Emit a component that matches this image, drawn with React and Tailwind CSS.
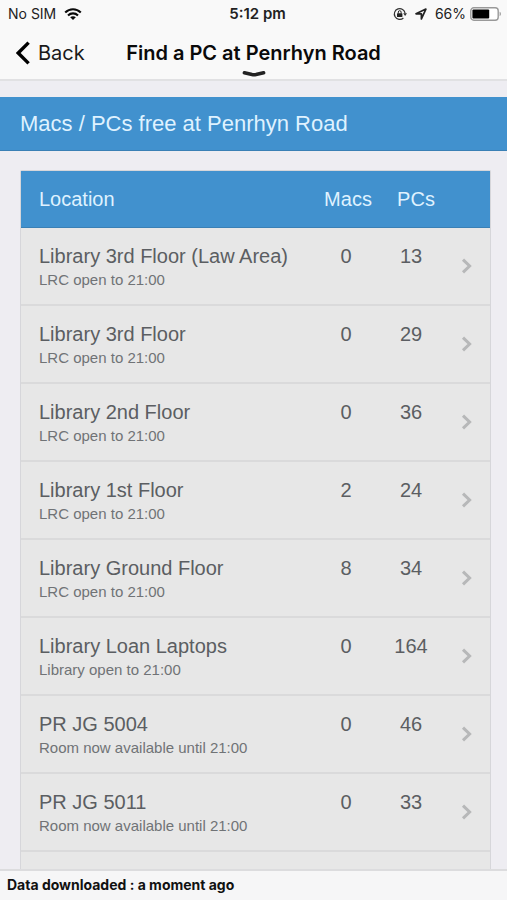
import React from "react";

const rooms = [
  { name: "Library 3rd Floor (Law Area)", note: "LRC open to 21:00", macs: 0, pcs: 13 },
  { name: "Library 3rd Floor", note: "LRC open to 21:00", macs: 0, pcs: 29 },
  { name: "Library 2nd Floor", note: "LRC open to 21:00", macs: 0, pcs: 36 },
  { name: "Library 1st Floor", note: "LRC open to 21:00", macs: 2, pcs: 24 },
  { name: "Library Ground Floor", note: "LRC open to 21:00", macs: 8, pcs: 34 },
  { name: "Library Loan Laptops", note: "Library open to 21:00", macs: 0, pcs: 164 },
  { name: "PR JG 5004", note: "Room now available until 21:00", macs: 0, pcs: 46 },
  { name: "PR JG 5011", note: "Room now available until 21:00", macs: 0, pcs: 33 },
];

function WifiIcon() {
  return (
    <svg className="h-3 w-[18px]" viewBox="0 0 18 12" aria-hidden="true">
      <g fill="none" stroke="#0a0a0a" strokeWidth="2.1">
        <path d="M1.2 4.6C5.6 0.2 12.4 0.2 16.8 4.6" />
        <path d="M4 7.4C6.8 4.7 11.2 4.7 14 7.4" />
      </g>
      <path d="M9 12L6.2 9.3C7.8 7.9 10.2 7.9 11.8 9.3Z" fill="#0a0a0a" />
    </svg>
  );
}

function RotationLockIcon() {
  return (
    <svg className="size-3.5" viewBox="0 0 14 14" aria-hidden="true">
      <path d="M10.4 11A5.4 5.4 0 1 1 12.1 6.4" fill="none" stroke="#333" strokeWidth="1.2" />
      <path d="M10.2 6.2H14L12.1 8.9Z" fill="#333" />
      <rect x="4" y="6.2" width="5.4" height="3.9" rx="0.5" fill="#222" />
      <path d="M5.3 6.5V5.1A1.4 1.4 0 0 1 8.1 5.1V6.5" fill="none" stroke="#222" strokeWidth="1" />
    </svg>
  );
}

function LocationIcon() {
  return (
    <svg className="size-3" viewBox="0 0 12 12" aria-hidden="true">
      <path d="M1 5.8L10.9 1.1L6.4 10.9V5.9Z" fill="none" stroke="#222" strokeWidth="1.7" strokeLinejoin="round" />
    </svg>
  );
}

function BatteryIcon() {
  return (
    <svg className="h-3.5 w-8" viewBox="0 0 32 14" aria-hidden="true">
      <rect x="0.8" y="0.8" width="27.4" height="12.4" rx="3" fill="#fff" stroke="#999" strokeWidth="1.4" />
      <rect x="2.4" y="2.4" width="16.8" height="9.2" rx="1" fill="#000" />
      <path d="M29.6 4.8C31.3 5.4 31.3 8.6 29.6 9.2Z" fill="#999" />
    </svg>
  );
}

function StatusBar() {
  return (
    <div className="grid h-7 grid-cols-3 items-center pl-2 pr-1 text-sm text-[#222]">
      <div className="flex items-center gap-2">
        <span>No SIM</span>
        <WifiIcon />
      </div>
      <div className="pl-1 text-center text-[15px] font-semibold">5:12 pm</div>
      <div className="flex items-center justify-end gap-2 pr-px">
        <RotationLockIcon />
        <LocationIcon />
        <div className="flex items-center gap-1">
          <span>66%</span>
          <BatteryIcon />
        </div>
      </div>
    </div>
  );
}

function TitleBar() {
  return (
    <div className="grid h-[51px] grid-cols-[1fr_auto_1fr] items-center px-4 pb-0.5">
      <button type="button" className="flex items-center gap-2 text-xl text-[#1a1a1a]">
        <svg className="h-6 w-3.5" viewBox="0 0 14 24" aria-hidden="true">
          <path d="M12.6 1.6L2.2 12L12.6 22.4" fill="none" stroke="#000" strokeWidth="3.4" />
        </svg>
        Back
      </button>
      <div className="relative">
        <h1 className="text-xl font-semibold text-[#0a0a0a]">Find a PC at Penrhyn Road</h1>
        <svg className="absolute -bottom-2.5 left-1/2 h-1.5 w-6 -translate-x-1/2" viewBox="0 0 24 6" aria-hidden="true">
          <path d="M2.4 1.8L10 3.6Q12 4 14 3.6L21.6 1.8" fill="none" stroke="#222" strokeWidth="3.6" strokeLinecap="round" />
        </svg>
      </div>
    </div>
  );
}

function RoomRow({ room }) {
  return (
    <tr className="h-[78px] border-b-2 border-[#dadadb] text-[#5b5e62]">
      <td className="pl-[18px] pt-4 align-top">
        <a href="#room" className="block text-xl leading-6">{room.name}</a>
        <p className="text-[15px] leading-6 text-[#707376]">{room.note}</p>
      </td>
      <td className="pt-4 text-center align-top text-xl leading-6">{room.macs}</td>
      <td className="pt-4 text-center align-top text-xl leading-6">{room.pcs}</td>
      <td>
        <svg className="ml-[18px] h-4 w-3" viewBox="0 0 12 16" aria-hidden="true">
          <path d="M2 1.6L8.6 8L2 14.4" fill="none" stroke="#b7b8b9" strokeWidth="3" />
        </svg>
      </td>
    </tr>
  );
}

export default function App() {
  return (
    <div className="flex h-screen flex-col bg-[#eeedf2] font-['Liberation_Sans',Arial,sans-serif]">
      <header className="shrink-0 border-b-2 border-[#e1e1e3] bg-[#f9f9f9] font-['Inter',sans-serif]">
        <StatusBar />
        <TitleBar />
      </header>
      <main className="min-h-0 flex-1 overflow-hidden pt-4">
        <h2 className="h-[54px] border-b border-[#3a80b5] bg-[#4191ce] px-5 text-[22px] leading-[54px] text-[#dff2ff]">
          Macs / PCs free at Penrhyn Road
        </h2>
        <div className="ml-5 mr-4 mt-[19px] rounded-t-xs border-x border-t border-[#d6d6da] bg-[#e7e7e7]">
          <table className="w-full table-fixed border-collapse">
            <colgroup>
              <col />
              <col className="w-[66px]" />
              <col className="w-16" />
              <col className="w-[47px]" />
            </colgroup>
            <thead>
              <tr className="h-14 border-b border-[#3a80b5] bg-[#4191ce] text-xl text-[#dff2ff]">
                <th className="pl-[18px] text-left font-normal">Location</th>
                <th className="pl-1 font-normal">Macs</th>
                <th className="pl-2.5 font-normal">PCs</th>
                <th aria-label="Open"></th>
              </tr>
            </thead>
            <tbody>
              {rooms.map((room) => (
                <RoomRow key={room.name} room={room} />
              ))}
              <tr className="h-[78px]">
                <td colSpan={4}></td>
              </tr>
            </tbody>
          </table>
        </div>
      </main>
      <footer className="h-[31px] shrink-0 border-t-2 border-[#dcdcde] bg-[#f6f6f7] px-[7px] font-['Inter',sans-serif] text-sm font-bold leading-7 text-[#111]">
        Data downloaded : a moment ago
      </footer>
    </div>
  );
}
